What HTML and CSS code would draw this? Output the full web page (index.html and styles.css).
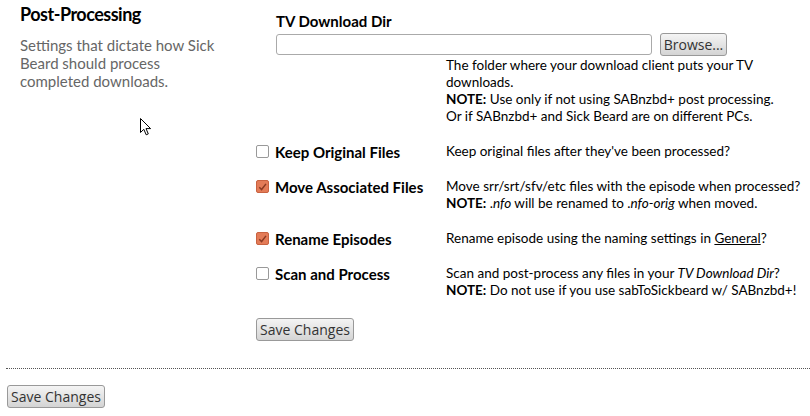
FILE: index.html
```html
<!DOCTYPE html>
<html>
<head>
<meta charset="utf-8">
<link rel="stylesheet" href="styles.css">
</head>
<body>
<div class="wrap">
  <div class="section">
    <div class="side">
      <h3 class="title">Post-Processing</h3>
      <p class="blurb">Settings that dictate how Sick<br>Beard should process<br>completed downloads.</p>
    </div>
    <div class="main">
      <div class="dirfield">
        <div class="dirlabel">TV Download Dir</div>
        <div class="dirinputs">
          <span class="textbox"></span>
          <button class="btn browse">Browse...</button>
        </div>
        <div class="desc dirdesc">The folder where your download client puts your TV<br>downloads.<br><b>NOTE:</b> Use only if not using SABnzbd+ post processing.<br>Or if SABnzbd+ and Sick Beard are on different PCs.</div>
      </div>
      <div class="row">
        <div class="opt"><span class="cb"></span><span class="optlabel">Keep Original Files</span></div>
        <div class="desc">Keep original files after they've been processed?</div>
      </div>
      <div class="row">
        <div class="opt"><span class="cb on"><svg viewBox="0 0 12 12" width="12" height="12"><path d="M2.5 6.2 L5 8.8 L9.8 2.6" fill="none" stroke="#8a3a22" stroke-width="1.6"/></svg></span><span class="optlabel">Move Associated Files</span></div>
        <div class="desc">Move srr/srt/sfv/etc files with the episode when processed?<br><b>NOTE:</b> .<i>nfo</i> will be renamed to .<i>nfo-orig</i> when moved.</div>
      </div>
      <div class="row">
        <div class="opt"><span class="cb on"><svg viewBox="0 0 12 12" width="12" height="12"><path d="M2.5 6.2 L5 8.8 L9.8 2.6" fill="none" stroke="#8a3a22" stroke-width="1.6"/></svg></span><span class="optlabel">Rename Episodes</span></div>
        <div class="desc">Rename episode using the naming settings in <span class="link">General</span>?</div>
      </div>
      <div class="row">
        <div class="opt"><span class="cb"></span><span class="optlabel">Scan and Process</span></div>
        <div class="desc">Scan and post-process any files in your <i>TV Download Dir</i>?<br><b>NOTE:</b> Do not use if you use sabToSickbeard w/ SABnzbd+!</div>
      </div>
      <button class="btn save">Save Changes</button>
    </div>
  </div>
  <div class="divider"></div>
  <button class="btn save bottom">Save Changes</button>
</div>
<svg class="cursor" width="12" height="18" viewBox="0 0 12 18"><path d="M0.5 0.5 L0.5 14.5 L3.8 11.3 L6.2 16.8 L8.3 15.9 L6 10.6 L10.6 10.6 Z" fill="#fff" stroke="#000" stroke-width="1" stroke-linejoin="miter"/></svg>
</body>
</html>
```
FILE: styles.css
```css
html, body {
  margin: 0;
  padding: 0;
  background: #fff;
}
body {
  font-family: Lato, "Open Sans", sans-serif;
  color: #000;
  position: relative;
}
.wrap {
  padding-left: 6px;
}
.section {
  display: flex;
  padding-left: 14px;
}
.side {
  width: 236px;
  flex: none;
}
.title {
  margin: 0;
  padding-top: 3px;
  font-size: 18px;
  letter-spacing: -0.5px;
  line-height: 22px;
  font-weight: bold;
}
.blurb {
  margin: 11px 0 0;
  font-size: 15px;
  line-height: 18px;
  color: #666;
  white-space: nowrap;
}
.main {
  flex: 1;
  padding-top: 12px;
}
.dirfield {
  display: flex;
  flex-direction: column;
}
.dirlabel {
  margin-left: 20px;
  font-size: 15px;
  font-weight: bold;
  line-height: 18px;
}
.dirinputs {
  display: flex;
  align-items: center;
  gap: 8px;
  margin-left: 20px;
  margin-top: 3px;
}
.textbox {
  display: block;
  width: 374px;
  height: 19px;
  border: 1px solid #aaa;
  border-radius: 3px;
  background: #fff;
}
.btn {
  font-family: "Open Sans", sans-serif;
  font-size: 14px;
  color: #333;
  background: linear-gradient(#f4f4f4, #d4d4d4);
  border: 1px solid #999;
  border-radius: 3px;
  padding: 0 3px;
  height: 23px;
  line-height: 20px;
  white-space: nowrap;
}
.browse {
  width: 67px;
  padding: 0;
}
.desc {
  font-size: 13.5px;
  line-height: 17px;
  white-space: nowrap;
}
.dirdesc {
  margin-left: 190px;
  margin-top: 1px;
}
.row {
  display: flex;
  margin-top: 18px;
}
.row:first-of-type {
  margin-top: 20px;
}
.opt {
  width: 190px;
  flex: none;
  display: flex;
  align-items: center;
  height: 17px;
}
.optlabel {
  font-size: 15px;
  font-weight: bold;
  margin-left: 6px;
}
.cb {
  width: 11px;
  height: 11px;
  border: 1px solid #999;
  border-radius: 2px;
  background: #fff;
  display: flex;
  align-items: center;
  justify-content: center;
  flex: none;
}
.cb.on {
  background: #e37b57;
  border-color: #c96240;
}
.cb svg {
  display: block;
}
.link {
  text-decoration: underline;
}
.save {
  display: block;
  margin-top: 19px;
  width: 98px;
}
.divider {
  border-top: 1px dotted #555;
  margin-top: 27px;
}
.bottom {
  margin-top: 16px;
  margin-left: 1px;
}
.cursor {
  position: absolute;
  left: 140px;
  top: 118px;
}
```
